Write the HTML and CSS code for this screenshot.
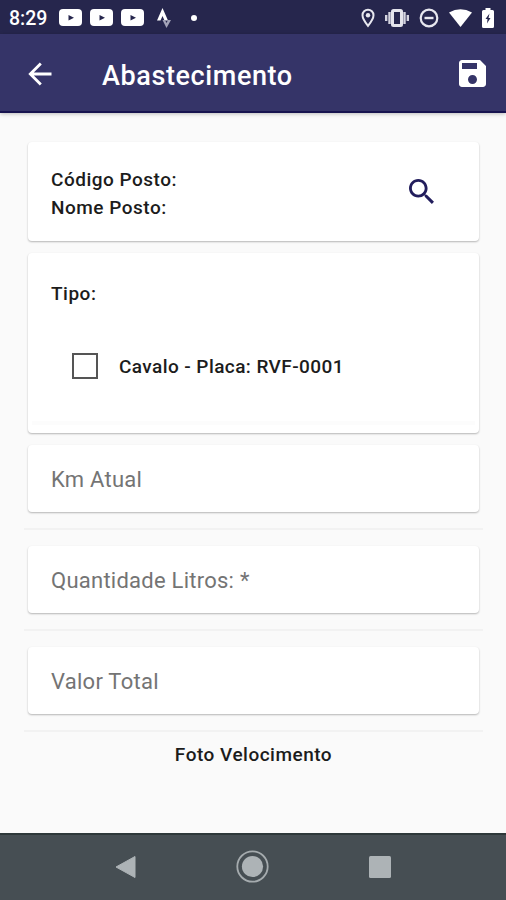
FILE: index.html
```html
<!DOCTYPE html>
<html lang="pt-BR">
<head>
    <meta charset="UTF-8">
    <meta name="viewport" content="width=device-width, initial-scale=1.0">
    <title>Abastecimento</title>
    <link rel="stylesheet" href="styles.css">
</head>
<body>
    <div class="status-bar">
        <span class="clock">8:29</span>
        <div class="notifications">
            <svg width="23" height="17" viewBox="0 0 23 17"><rect width="23" height="17" rx="4" fill="#fff"/><path d="M9.500 6v5.500l5.500-2.750z" fill="#26264d"/></svg>
            <svg width="23" height="17" viewBox="0 0 23 17"><rect width="23" height="17" rx="4" fill="#fff"/><path d="M9.500 6v5.500l5.500-2.750z" fill="#26264d"/></svg>
            <svg width="23" height="17" viewBox="0 0 23 17"><rect width="23" height="17" rx="4" fill="#fff"/><path d="M9.500 6v5.500l5.500-2.750z" fill="#26264d"/></svg>
        </div>
        <svg class="strava" width="14" height="20" viewBox="0 0 14 20"><path d="M0 12.500L5.500 0L11 12.500H7.500L5.500 8L3.500 12.500z" fill="#fff"/><path d="M5.500 12H8L9.500 15L11 12H14L9.500 20z" fill="#a3a3b8"/></svg>
        <span class="dot"></span>
        <div class="system">
            <svg width="14" height="20" viewBox="0 0 14 20"><path d="M7 1.700A5.500 5.500 0 0 0 1.500 7.200C1.500 11 7 17.800 7 17.800S12.500 11 12.500 7.200A5.500 5.500 0 0 0 7 1.700z" fill="none" stroke="#e8e8f0" stroke-width="2"/><circle cx="7" cy="7.200" r="2.200" fill="#e8e8f0"/></svg>
            <svg width="24" height="18" viewBox="0 0 24 18"><rect x="7.500" y="1.500" width="9" height="15" rx="1" fill="none" stroke="#e4e4ec" stroke-width="3"/><path d="M4.500 3v12M19.500 3v12M1.200 6v6M22.800 6v6" stroke="#d4d4e0" stroke-width="2.400"/></svg>
            <svg width="20" height="20" viewBox="0 0 20 20"><circle cx="10" cy="10" r="8.300" fill="none" stroke="#e8e8f0" stroke-width="2.200"/><path d="M5.500 10h9" stroke="#e8e8f0" stroke-width="2.400"/></svg>
            <svg width="23" height="18" viewBox="0 0 23 18"><path d="M0 3.500Q11.500-3 23 3.500L11.500 18z" fill="#fff"/></svg>
            <svg width="12" height="20" viewBox="0 0 12 20"><path d="M1.500 2H3.500V0H8.500V2H10.500Q12 2 12 3.500V18.500Q12 20 10.500 20H1.500Q0 20 0 18.500V3.500Q0 2 1.500 2z" fill="#fff"/><path d="M7.500 5.500L3.500 11H5.500L5 15.500L8.500 10H6.500z" fill="#26264d"/></svg>
        </div>
    </div>

    <header class="app-bar">
        <svg class="back" width="24" height="24" viewBox="0 0 24 24"><path d="M23.500 12H3M12.800 1.500L2.300 12L12.800 22.500" fill="none" stroke="#fff" stroke-width="2.800"/></svg>
        <h1 class="title">Abastecimento</h1>
        <svg class="save" width="27" height="27" viewBox="3 3 18 18"><path d="M17 3H5c-1.110 0-2 .9-2 2v14c0 1.100.89 2 2 2h14c1.100 0 2-.9 2-2V7l-4-4zm-5 16c-1.660 0-3-1.340-3-3s1.340-3 3-3 3 1.340 3 3-1.340 3-3 3zm3-10H5V5h10v4z" fill="#fff"/></svg>
    </header>

    <main class="content">
        <section class="card station">
            <div>
                <p class="label">Código Posto:</p>
                <p class="label">Nome Posto:</p>
            </div>
            <svg class="search" width="25" height="25" viewBox="3 3 17.500 17.500"><path d="M15.500 14h-.79l-.28-.27C15.410 12.590 16 11.110 16 9.500 16 5.910 13.090 3 9.500 3S3 5.910 3 9.500 5.910 16 9.500 16c1.610 0 3.090-.59 4.230-1.570l.27.28v.79l5 4.990L20.490 19l-4.990-5zm-6 0C7.010 14 5 11.990 5 9.500S7.010 5 9.500 5 14 7.010 14 9.500 11.990 14 9.500 14z" fill="#221d5c"/></svg>
        </section>

        <section class="card type">
            <p class="label">Tipo:</p>
            <div class="option">
                <span class="checkbox"></span>
                <span class="label plate">Cavalo - Placa: RVF-0001</span>
            </div>
            <div class="type-end"></div>
        </section>

        <div class="card field km">Km Atual</div>
        <div class="divider"></div>
        <div class="card field liters">Quantidade Litros: *</div>
        <div class="divider"></div>
        <div class="card field total">Valor Total</div>
        <div class="divider"></div>

        <p class="label photo">Foto Velocimento</p>
    </main>

    <nav class="nav-bar">
        <svg width="21" height="24" viewBox="0 0 21 24"><path d="M20 1.500V22.500L1 12z" fill="#adb3b6" stroke="#adb3b6" stroke-linejoin="round"/></svg>
        <svg width="33" height="33" viewBox="0 0 33 33"><circle cx="16.500" cy="16.500" r="15.200" fill="none" stroke="#a5abae" stroke-width="1.800"/><circle cx="16.500" cy="16.500" r="10.600" fill="#adb3b6"/></svg>
        <svg width="22" height="22" viewBox="0 0 22 22"><rect width="22" height="22" rx="1.500" fill="#adb3b6"/></svg>
    </nav>
</body>
</html>
```
FILE: styles.css
```css
* {
    box-sizing: border-box;
}
body {
    margin: 0;
    height: 900px;
    display: flex;
    flex-direction: column;
    overflow: hidden;
    font-family: Roboto, sans-serif;
    background-color: #fafafa;
}
svg {
    display: block;
    flex-shrink: 0;
}
p,
h1 {
    margin: 0;
}
.status-bar {
    height: 34px;
    display: flex;
    align-items: center;
    padding: 1px 12px 0 9px;
    background-color: #26264d;
}
.clock {
    width: 50px;
    padding-top: 2px;
    font-size: 19.5px;
    font-weight: 500;
    color: #fff;
}
.notifications {
    display: flex;
    gap: 8px;
}
.strava {
    margin-left: 13px;
}
.dot {
    width: 6px;
    height: 6px;
    margin-left: 20px;
    border-radius: 50%;
    background-color: #fff;
}
.system {
    display: flex;
    align-items: center;
    gap: 10px;
    margin-left: auto;
}
.app-bar {
    height: 79px;
    display: flex;
    align-items: center;
    padding: 2px 20px 0 28px;
    background-color: #353468;
    border-bottom: 2px solid #17134f;
    box-shadow: 0 1px 4px rgba(0, 0, 0, 0.25);
}
.title {
    margin-left: 50px;
    padding-top: 4px;
    font-size: 27px;
    font-weight: 500;
    letter-spacing: 0.6px;
    color: #fff;
}
.save {
    margin-left: auto;
}
.content {
    flex: 1;
    padding: 29px 24px 0;
}
.card {
    margin: 0 3px 12px 4px;
    border-radius: 4px;
    background-color: #fff;
    box-shadow: 0 1px 2px rgba(0, 0, 0, 0.28);
}
.label {
    font-size: 19px;
    font-weight: 500;
    line-height: 28px;
    letter-spacing: 0.5px;
    color: #1c1c1c;
}
.station {
    height: 99px;
    display: flex;
    align-items: center;
    justify-content: space-between;
    padding: 5px 45px 0 23px;
}
.search {
    margin-bottom: 6px;
}
.type {
    height: 180px;
    display: flex;
    flex-direction: column;
    padding-top: 27px;
}
.type .label {
    padding-left: 23px;
}
.option {
    display: flex;
    align-items: center;
    margin-top: 44px;
    padding-left: 44px;
}
.checkbox {
    width: 26px;
    height: 26px;
    margin-bottom: 2px;
    border: 2px solid #555;
}
.type .plate {
    padding-top: 1px;
    padding-left: 21px;
    letter-spacing: 0.42px;
}
.type-end {
    height: 4px;
    margin: auto 4px 8px;
    background-color: #fcfcfc;
}
.field {
    height: 67px;
    display: flex;
    align-items: center;
    margin-bottom: 16px;
    padding-top: 2px;
    padding-left: 23px;
    font-size: 22px;
    letter-spacing: 0.25px;
    color: #747474;
}
.divider {
    height: 2px;
    margin: 0 -1px 16px 0;
    background-color: #f2f2f2;
}
.photo {
    margin-top: -7px;
    padding-left: 1px;
    text-align: center;
}
.nav-bar {
    height: 67px;
    display: flex;
    align-items: center;
    justify-content: space-between;
    padding: 0 115px 2px 115px;
    background-color: #464e53;
    border-top: 2px solid #2e383a;
}
```
